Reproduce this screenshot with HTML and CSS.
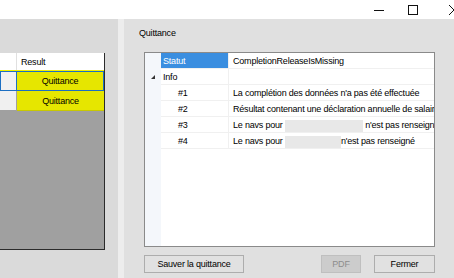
FILE: index.html
```html
<!DOCTYPE html>
<html lang="fr">
<head>
    <meta charset="UTF-8">
    <title>Quittance</title>
    <link rel="stylesheet" href="styles.css">
</head>
<body>
    <div class="titlebar">
        <span class="win-btn">
            <svg width="10" height="10" viewBox="0 0 10 10"><line x1="0" y1="5.5" x2="10" y2="5.5" stroke="#111" stroke-width="1"/></svg>
        </span>
        <span class="win-btn">
            <svg width="10" height="10" viewBox="0 0 10 10"><rect x="0.5" y="0.5" width="9" height="9" fill="none" stroke="#111" stroke-width="1"/></svg>
        </span>
        <span class="win-btn close">
            <svg width="10" height="10" viewBox="0 0 10 10"><path d="M0 0 L10 10 M10 0 L0 10" stroke="#111" stroke-width="1"/></svg>
        </span>
    </div>

    <div class="main">
        <div class="left-pane">
            <div class="grid">
                <div class="grid-row header">
                    <div class="row-head"></div>
                    <div class="cell">Result</div>
                </div>
                <div class="grid-row selected">
                    <div class="row-head"></div>
                    <div class="cell result">Quittance</div>
                </div>
                <div class="grid-row">
                    <div class="row-head"></div>
                    <div class="cell result">Quittance</div>
                </div>
            </div>
        </div>

        <div class="splitter"></div>

        <div class="right-pane">
            <div class="group-label">Quittance</div>
            <div class="prop-grid">
                <div class="prop-row">
                    <div class="margin"></div>
                    <div class="prop-name active">Statut</div>
                    <div class="prop-value">CompletionReleaseIsMissing</div>
                </div>
                <div class="prop-row">
                    <div class="margin"><span class="expander"></span></div>
                    <div class="prop-name">Info</div>
                    <div class="prop-value"></div>
                </div>
                <div class="prop-row">
                    <div class="margin"></div>
                    <div class="prop-name sub">#1</div>
                    <div class="prop-value">La complétion des données n'a pas été effectuée</div>
                </div>
                <div class="prop-row">
                    <div class="margin"></div>
                    <div class="prop-name sub">#2</div>
                    <div class="prop-value">Résultat contenant une déclaration annuelle de salaire</div>
                </div>
                <div class="prop-row">
                    <div class="margin"></div>
                    <div class="prop-name sub">#3</div>
                    <div class="prop-value">Le navs pour <span class="blur" style="width:78px"></span> n'est pas renseigné</div>
                </div>
                <div class="prop-row">
                    <div class="margin"></div>
                    <div class="prop-name sub">#4</div>
                    <div class="prop-value">Le navs pour <span class="blur" style="width:56px"></span>n'est pas renseigné</div>
                </div>
                <div class="prop-fill">
                    <div class="margin"></div>
                </div>
            </div>
            <div class="buttons">
                <button class="btn save">Sauver la quittance</button>
                <button class="btn pdf" disabled>PDF</button>
                <button class="btn close-btn">Fermer</button>
            </div>
        </div>
    </div>
</body>
</html>
```

FILE: styles.css
```css
/* --- Window --- */

body {
    margin: 0;
    width: 454px;
    height: 278px;
    overflow: hidden;
    font-family: "Liberation Sans", Arial, sans-serif;
    font-size: 9px;
    letter-spacing: -0.2px;
    color: #000;
    background: #e0e0e0;
}

.titlebar {
    height: 19px;
    background: #fff;
    display: flex;
    justify-content: flex-end;
    align-items: center;
}

.win-btn {
    width: 34px;
    display: flex;
    justify-content: center;
}

.win-btn svg {
    display: block;
    flex-shrink: 0;
}

.win-btn.close {
    width: 10px;
    margin-left: 19px;
    margin-right: -5px;
}

.main {
    display: flex;
    height: 259px;
}

/* --- Left grid --- */

.left-pane {
    width: 118px;
    background: #dadada;
    padding-top: 34px;
}

.grid {
    width: 104px;
    height: 196px;
    background: #a0a0a0;
    border-right: 1px solid #2b2b2b;
    border-bottom: 1px solid #2b2b2b;
}

.grid-row {
    display: flex;
    height: 20px;
}

.grid-row.header {
    height: 17px;
    background: #fff;
    border-bottom: 1px solid #f2f200;
}

.row-head {
    width: 17px;
    background: #f0f0f0;
    border-right: 1px solid #a0a0a0;
    border-bottom: 1px solid #a0a0a0;
    box-sizing: border-box;
}

.header .row-head {
    background: #fff;
    border-bottom: none;
    border-right: 1px solid #e0e0e0;
}

.cell {
    flex: 1;
    display: flex;
    align-items: center;
    padding-left: 4px;
    box-sizing: border-box;
}

.cell.result {
    justify-content: center;
    padding-left: 0;
    background: #e6e600;
    border-bottom: 1px solid #c8c800;
}

.selected .row-head {
    border: 1px solid #1c6fc2;
}

.selected .cell.result {
    border: 1px solid #1c6fc2;
    border-left: none;
}

.splitter {
    width: 6px;
    background: #ededed;
}

/* --- Right pane --- */

.right-pane {
    flex: 1;
    padding-left: 20px;
    background: #e0e0e0;
}

.group-label {
    height: 14px;
    line-height: 14px;
    margin: 7px 0 12px -5px;
}

.prop-grid {
    width: 289px;
    height: 193px;
    background: #fff;
    border: 1px solid #8a8a8a;
    display: flex;
    flex-direction: column;
}

.prop-row {
    display: flex;
    height: 16px;
}

.margin {
    width: 16px;
    background: #f4f7fb;
    display: flex;
    align-items: center;
    justify-content: center;
}

.prop-name {
    width: 68px;
    padding-left: 2px;
    box-sizing: border-box;
    line-height: 16px;
    border-bottom: 1px solid #f0f0f0;
    border-right: 1px solid #f0f0f0;
}

.prop-name.active {
    background: #3a8ee0;
    color: #fff;
}

.prop-name.sub {
    padding-left: 17px;
}

.prop-value {
    flex: 1;
    padding-left: 4px;
    line-height: 16px;
    white-space: nowrap;
    overflow: hidden;
    border-bottom: 1px solid #f0f0f0;
}

.expander {
    width: 0;
    height: 0;
    border-left: 4px solid transparent;
    border-bottom: 4px solid #333;
}

.blur {
    display: inline-block;
    height: 12px;
    vertical-align: middle;
    background: #e8e8e8;
}

.prop-fill {
    flex: 1;
    display: flex;
}

/* --- Buttons --- */

.buttons {
    display: flex;
    align-items: center;
    margin-top: 8px;
    width: 291px;
}

.btn {
    height: 18px;
    font-family: inherit;
    font-size: 9px;
    letter-spacing: -0.2px;
    padding: 0;
    background: #e1e1e1;
    border: 1px solid #adadad;
    color: #000;
}

.btn.save {
    width: 100px;
}

.btn.pdf {
    width: 40px;
    margin-left: auto;
    background: #cccccc;
    border-color: #bfbfbf;
    color: #8d8d8d;
}

.btn.close-btn {
    width: 61px;
    margin-left: 13px;
}
```
